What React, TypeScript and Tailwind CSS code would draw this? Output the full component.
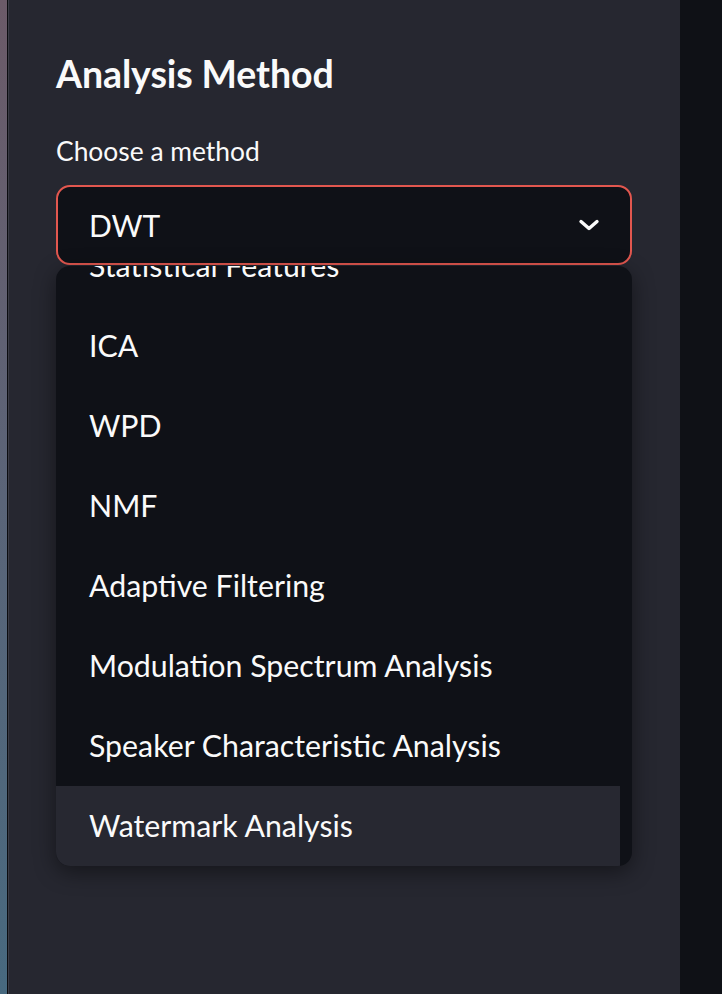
import React from 'react';

const options = [
  'Statistical Features',
  'ICA',
  'WPD',
  'NMF',
  'Adaptive Filtering',
  'Modulation Spectrum Analysis',
  'Speaker Characteristic Analysis',
  'Watermark Analysis',
];

const Chevron = () => (
  <svg width="22" height="14" viewBox="0 0 22 14" fill="none">
    <path d="M3 3.5 L11 10.5 L19 3.5" stroke="#fafafa" strokeWidth="3.4" strokeLinecap="round" strokeLinejoin="round" />
  </svg>
);

export default function App() {
  const active = 'Watermark Analysis';

  return (
    <div className="flex h-[994px] w-[722px] overflow-hidden bg-[#0e1117] font-['Lato',sans-serif] text-[#fafafa]">
      {/* background app peeking from the left */}
      <div className="w-[7px] bg-gradient-to-b from-[#6b5a68] via-[#5a6478] to-[#47697f]" />
      <div className="w-px bg-[#0b0c10]" />
      <div className="w-px bg-[#3b3c46]" />

      {/* Sidebar */}
      <aside className="flex w-[671px] flex-col bg-[#262730] pl-[47px] pr-[48px] pt-[51px]">
        <h2 className="text-[37.5px] font-bold leading-[46px] tracking-[-0.1px]">Analysis Method</h2>

        <label className="mt-[37px] text-[26.4px] leading-[34px] text-[#fafafa]">Choose a method</label>

        <div className="relative mt-[17px]">
          <div className="flex h-[80px] items-center justify-between rounded-[14px] border-2 border-[#e2574f] bg-[#0f1117] pl-[31px] pr-[30px]">
            <span className="text-[30px]">DWT</span>
            <Chevron />
          </div>

          {/* Open menu */}
          <div className="absolute left-0 right-0 top-[81px] h-[600px] overflow-hidden rounded-[14px] bg-[#0f1117] shadow-[0_6px_22px_rgba(0,0,0,0.45)]">
            <ul className="-mt-[40px] pr-[12px]">
              {options.map((o) => (
                <li
                  key={o}
                  className={`flex h-[80px] items-center pl-[33px] text-[30.3px] ${o === active ? 'bg-[#272831]' : ''}`}
                >
                  {o}
                </li>
              ))}
            </ul>
          </div>
        </div>
      </aside>

      <div className="flex-1 bg-[#0f1116]" />
    </div>
  );
}
